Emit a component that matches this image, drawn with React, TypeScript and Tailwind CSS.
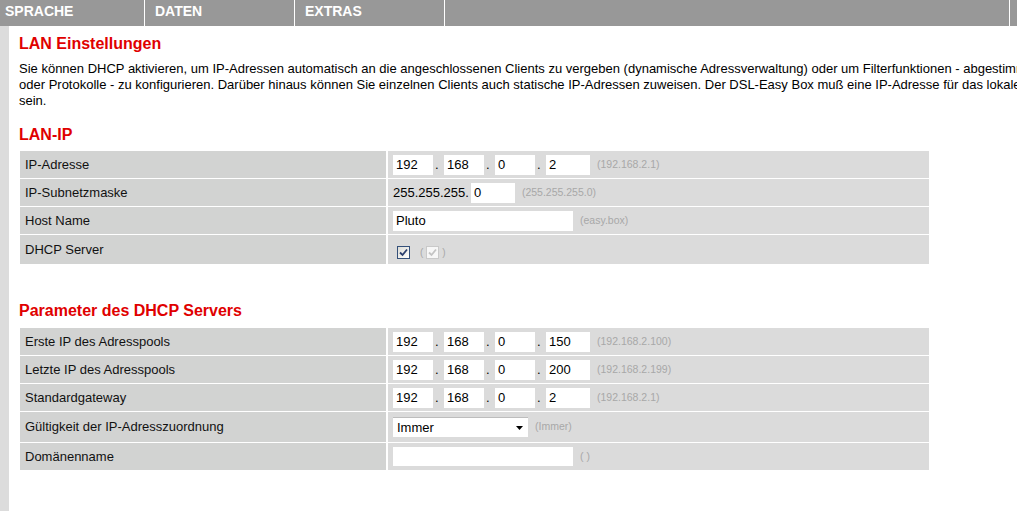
const Hint = ({ children }: { children: React.ReactNode }) => (
  <span className="ml-[7px] text-[10.5px] text-[#a8a8a8]">{children}</span>
);

const Field = ({ value, w = "w-[40px]" }: { value: string; w?: string }) => (
  <input
    readOnly
    value={value}
    className={`${w} h-[20px] bg-white px-[3px] text-[13px] text-black outline-none`}
  />
);

const Dot = () => <span className="w-[11px] pl-[2px] text-[13px]">.</span>;

const IpFields = ({ parts, hint }: { parts: string[]; hint: string }) => (
  <div className="flex items-center">
    <Field value={parts[0]} />
    <Dot />
    <Field value={parts[1]} />
    <Dot />
    <Field value={parts[2]} />
    <Dot />
    <Field value={parts[3]} w="w-[44px]" />
    <Hint>{hint}</Hint>
  </div>
);

const Check = ({ disabled }: { disabled?: boolean }) => (
  <span
    className={`inline-flex w-[13px] h-[13px] items-center justify-center border ${
      disabled
        ? "border-[#c9c9c9] bg-[#f7f7f7]"
        : "border-[#34507a] bg-gradient-to-br from-[#dcdcd6] to-white"
    }`}
  >
    <svg width="9" height="9" viewBox="0 0 9 9">
      <path
        d="M1 4.5 L3.5 7 L8 1.5"
        fill="none"
        stroke={disabled ? "#c4c4c4" : "#2b3f6e"}
        strokeWidth="1.8"
      />
    </svg>
  </span>
);

const Row = ({
  label,
  h = "h-[27px]",
  children,
}: {
  label: string;
  h?: string;
  children: React.ReactNode;
}) => (
  <div className={`flex gap-[2px] ${h}`}>
    <div className="w-[366px] bg-[#d2d3d2] pl-[5px] flex items-center text-[13px] text-[#111]">
      {label}
    </div>
    <div className="w-[541px] bg-[#dbdbdb] pl-[5px] flex items-center text-[13px] text-black">
      {children}
    </div>
  </div>
);

const Heading = ({ children, className = "" }: { children: React.ReactNode; className?: string }) => (
  <h2 className={`text-[16px] leading-[20px] font-bold text-[#e00000] ${className}`}>{children}</h2>
);

export default function App() {
  return (
    <div className="w-[1017px] h-[511px] overflow-hidden bg-white font-['Liberation_Sans',Arial,sans-serif] flex flex-col">
      <nav className="flex h-[26px] shrink-0 bg-[#989898] text-white text-[14px] leading-[16px] font-bold">
        <div className="w-[145px] shrink-0 pl-[5px] pt-[3px] border-r border-white">SPRACHE</div>
        <div className="w-[150px] shrink-0 pl-[10px] pt-[3px] border-r border-white">DATEN</div>
        <div className="w-[150px] shrink-0 pl-[10px] pt-[3px] border-r border-white">EXTRAS</div>
        <div className="w-[565px] shrink-0 border-r border-white"></div>
        <div className="flex-1"></div>
      </nav>

      <div className="flex flex-1 min-h-0">
        <div className="w-[9px] shrink-0 bg-[#dcdcdc]"></div>
        <main className="flex-1 min-w-0 pl-[10px]">
          <Heading className="mt-[8px]">LAN Einstellungen</Heading>
          <p className="mt-[7px] text-[13px] leading-[16px] text-black whitespace-nowrap">
            Sie können DHCP aktivieren, um IP-Adressen automatisch an die angeschlossenen Clients zu vergeben (dynamische Adressverwaltung) oder um Filterfunktionen - abgestimmt auf bestimmte Dienste
            <br />
            oder Protokolle - zu konfigurieren. Darüber hinaus können Sie einzelnen Clients auch statische IP-Adressen zuweisen. Der DSL-Easy Box muß eine IP-Adresse für das lokale Netzwerk zugewiesen
            <br />
            sein.
          </p>

          <Heading className="mt-[16px]">LAN-IP</Heading>
          <div className="mt-[6px] ml-[1px] flex flex-col gap-[1px] w-[909px]">
            <Row label="IP-Adresse">
              <IpFields parts={["192", "168", "0", "2"]} hint="(192.168.2.1)" />
            </Row>
            <Row label="IP-Subnetzmaske">
              <span>255.255.255.</span>
              <input
                readOnly
                value="0"
                className="ml-[2px] w-[44px] h-[20px] bg-white px-[3px] text-[13px] outline-none"
              />
              <Hint>(255.255.255.0)</Hint>
            </Row>
            <Row label="Host Name">
              <input
                readOnly
                value="Pluto"
                className="w-[180px] h-[20px] bg-white px-[3px] text-[13px] outline-none"
              />
              <Hint>(easy.box)</Hint>
            </Row>
            <Row label="DHCP Server" h="h-[29px]">
              <span className="ml-[4px] mt-[5px] flex">
                <Check />
              </span>
              <span className="ml-[10px] mt-[5px] flex items-center gap-[3px] text-[10px] text-[#a8a8a8]">
                (<Check disabled />)
              </span>
            </Row>
          </div>

          <Heading className="mt-[37px]">Parameter des DHCP Servers</Heading>
          <div className="mt-[7px] ml-[1px] flex flex-col gap-[1px] w-[909px]">
            <Row label="Erste IP des Adresspools">
              <IpFields parts={["192", "168", "0", "150"]} hint="(192.168.2.100)" />
            </Row>
            <Row label="Letzte IP des Adresspools">
              <IpFields parts={["192", "168", "0", "200"]} hint="(192.168.2.199)" />
            </Row>
            <Row label="Standardgateway">
              <IpFields parts={["192", "168", "0", "2"]} hint="(192.168.2.1)" />
            </Row>
            <Row label="Gültigkeit der IP-Adresszuordnung" h="h-[30px]">
              <div className="w-[135px] h-[20px] bg-white border-t border-[#bdbdbd] flex items-center justify-between pl-[4px] pr-[5px] text-[13px]">
                <span>Immer</span>
                <svg width="7" height="4" viewBox="0 0 7 4">
                  <path d="M0 0 H7 L3.5 4 Z" fill="#000" />
                </svg>
              </div>
              <Hint>(Immer)</Hint>
            </Row>
            <Row label="Domänenname">
              <input
                readOnly
                value=""
                className="w-[180px] h-[19px] bg-white px-[3px] text-[13px] outline-none"
              />
              <Hint>( )</Hint>
            </Row>
          </div>
        </main>
      </div>
    </div>
  );
}
